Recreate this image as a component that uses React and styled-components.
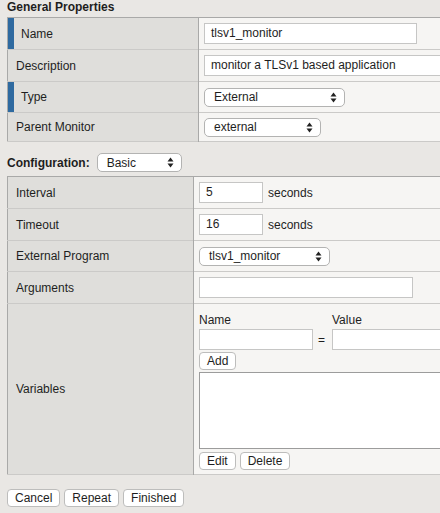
import React from 'react';
import styled, { createGlobalStyle } from 'styled-components';

const GlobalStyle = createGlobalStyle`
  html, body {
    margin: 0;
    background: #e9e7e4;
    overflow: hidden;
  }
  body {
    font-family: "Liberation Sans", Helvetica, Arial, sans-serif;
    font-size: 12px;
    color: #1e1e1e;
  }
`;

const Page = styled.div`
  padding-left: 7px;
  width: 433px;
`;

const SectionTitle = styled.div`
  font-weight: bold;
  height: 17px;
  line-height: 14px;
`;

const ConfigBar = styled.div`
  display: flex;
  align-items: center;
  gap: 7px;
  margin: 11px 0 4px;
  height: 19px;
  font-weight: bold;
`;

const PropTable = styled.table`
  width: 100%;
  border-collapse: collapse;
  border: 1px solid #a9a9a8;
  border-right: none;
`;

const Row = styled.tr`
  height: ${(p) => p.$h || 30}px;
  border-bottom: 1px solid #cbcac8;
`;

const Label = styled.td`
  width: ${(p) => p.$w}px;
  box-sizing: border-box;
  background: #dfdedb;
  border-right: 1px solid #a9a9a8;
  padding: 0 0 0 ${(p) => (p.$mark ? 13 : 8)}px;
  box-shadow: ${(p) => (p.$mark ? 'inset 6px 0 0 #2f6aa0' : 'none')};
  vertical-align: middle;
`;

const Value = styled.td`
  background: #f6f5f3;
  padding: 0 0 0 5px;
  vertical-align: middle;
`;

const TextInput = styled.div`
  box-sizing: border-box;
  width: ${(p) => p.$w}px;
  height: 21px;
  line-height: 19px;
  background: #fff;
  border: 1px solid #c6c6c5;
  border-right: ${(p) => (p.$cut ? 'none' : '1px solid #c6c6c5')};
  padding: 0 6px;
  white-space: nowrap;
  overflow: hidden;
`;

const Inline = styled.div`
  display: flex;
  align-items: center;
  gap: 5px;
`;

const SelectBox = styled.div`
  box-sizing: border-box;
  width: ${(p) => p.$w}px;
  height: 19px;
  display: flex;
  align-items: center;
  justify-content: space-between;
  background: #fff;
  border: 1px solid #b3b3b2;
  border-radius: 5px;
  padding: 0 7px 0 9px;
  font-weight: normal;
`;

const Button = styled.div`
  display: inline-flex;
  align-items: center;
  box-sizing: border-box;
  height: 18px;
  padding: 0 7px;
  background: #fff;
  border: 1px solid #bdbdbc;
  border-radius: 4px;
`;

const ButtonRow = styled.div`
  display: flex;
  gap: 4px;
  margin-top: ${(p) => p.$mt ?? 3}px;
`;

const VarCell = styled(Value)`
  padding: 8px 0 4px 5px;
  vertical-align: top;
`;

const VarGrid = styled.div`
  display: grid;
  grid-template-columns: 113px 20px 1fr;
  align-items: center;
`;

const SmallLabel = styled.div`
  height: 17px;
  line-height: 16px;
`;

const Equals = styled.div`
  text-align: center;
  padding-right: 1px;
`;

const ListBox = styled.div`
  margin-top: 2px;
  height: 77px;
  box-sizing: border-box;
  background: #fff;
  border: 1px solid #9c9c9c;
  border-right: none;
`;

const Footer = styled.div`
  margin-top: 14px;
`;

const Arrows = () => (
  <svg width="7" height="11" viewBox="0 0 7 11">
    <path d="M3.5 0.5 L6.5 4.5 H0.5 Z" fill="#222" />
    <path d="M3.5 10.5 L6.5 6.5 H0.5 Z" fill="#222" />
  </svg>
);

const Select = ({ w, children }) => (
  <SelectBox $w={w}>
    <span>{children}</span>
    <Arrows />
  </SelectBox>
);

export default function App() {
  return (
    <>
      <GlobalStyle />
      <Page>
        <SectionTitle>General Properties</SectionTitle>
        <PropTable>
          <tbody>
            <Row $h={32}>
              <Label $w={192} $mark>Name</Label>
              <Value><TextInput $w={213}>tlsv1_monitor</TextInput></Value>
            </Row>
            <Row $h={32}>
              <Label $w={192}>Description</Label>
              <Value><TextInput $w={236} $cut>monitor a TLSv1 based application</TextInput></Value>
            </Row>
            <Row $h={31}>
              <Label $w={192} $mark>Type</Label>
              <Value><Select w={141}>External</Select></Value>
            </Row>
            <Row $h={29}>
              <Label $w={192}>Parent Monitor</Label>
              <Value><Select w={117}>external</Select></Value>
            </Row>
          </tbody>
        </PropTable>

        <ConfigBar>
          Configuration:
          <Select w={85}>Basic</Select>
        </ConfigBar>

        <PropTable>
          <tbody>
            <Row $h={32}>
              <Label $w={187}>Interval</Label>
              <Value>
                <Inline><TextInput $w={64}>5</TextInput>seconds</Inline>
              </Value>
            </Row>
            <Row $h={32}>
              <Label $w={187}>Timeout</Label>
              <Value>
                <Inline><TextInput $w={64}>16</TextInput>seconds</Inline>
              </Value>
            </Row>
            <Row $h={31}>
              <Label $w={187}>External Program</Label>
              <Value><Select w={131}>tlsv1_monitor</Select></Value>
            </Row>
            <Row $h={32}>
              <Label $w={187}>Arguments</Label>
              <Value><TextInput $w={214} /></Value>
            </Row>
            <Row $h={170}>
              <Label $w={187}>Variables</Label>
              <VarCell>
                <VarGrid>
                  <SmallLabel>Name</SmallLabel>
                  <div />
                  <SmallLabel>Value</SmallLabel>
                  <TextInput $w={114} />
                  <Equals>=</Equals>
                  <TextInput $w={108} $cut />
                </VarGrid>
                <ButtonRow $mt={2}>
                  <Button>Add</Button>
                </ButtonRow>
                <ListBox />
                <ButtonRow>
                  <Button>Edit</Button>
                  <Button>Delete</Button>
                </ButtonRow>
              </VarCell>
            </Row>
          </tbody>
        </PropTable>

        <Footer>
          <ButtonRow $mt={0}>
            <Button>Cancel</Button>
            <Button>Repeat</Button>
            <Button>Finished</Button>
          </ButtonRow>
        </Footer>
      </Page>
    </>
  );
}
